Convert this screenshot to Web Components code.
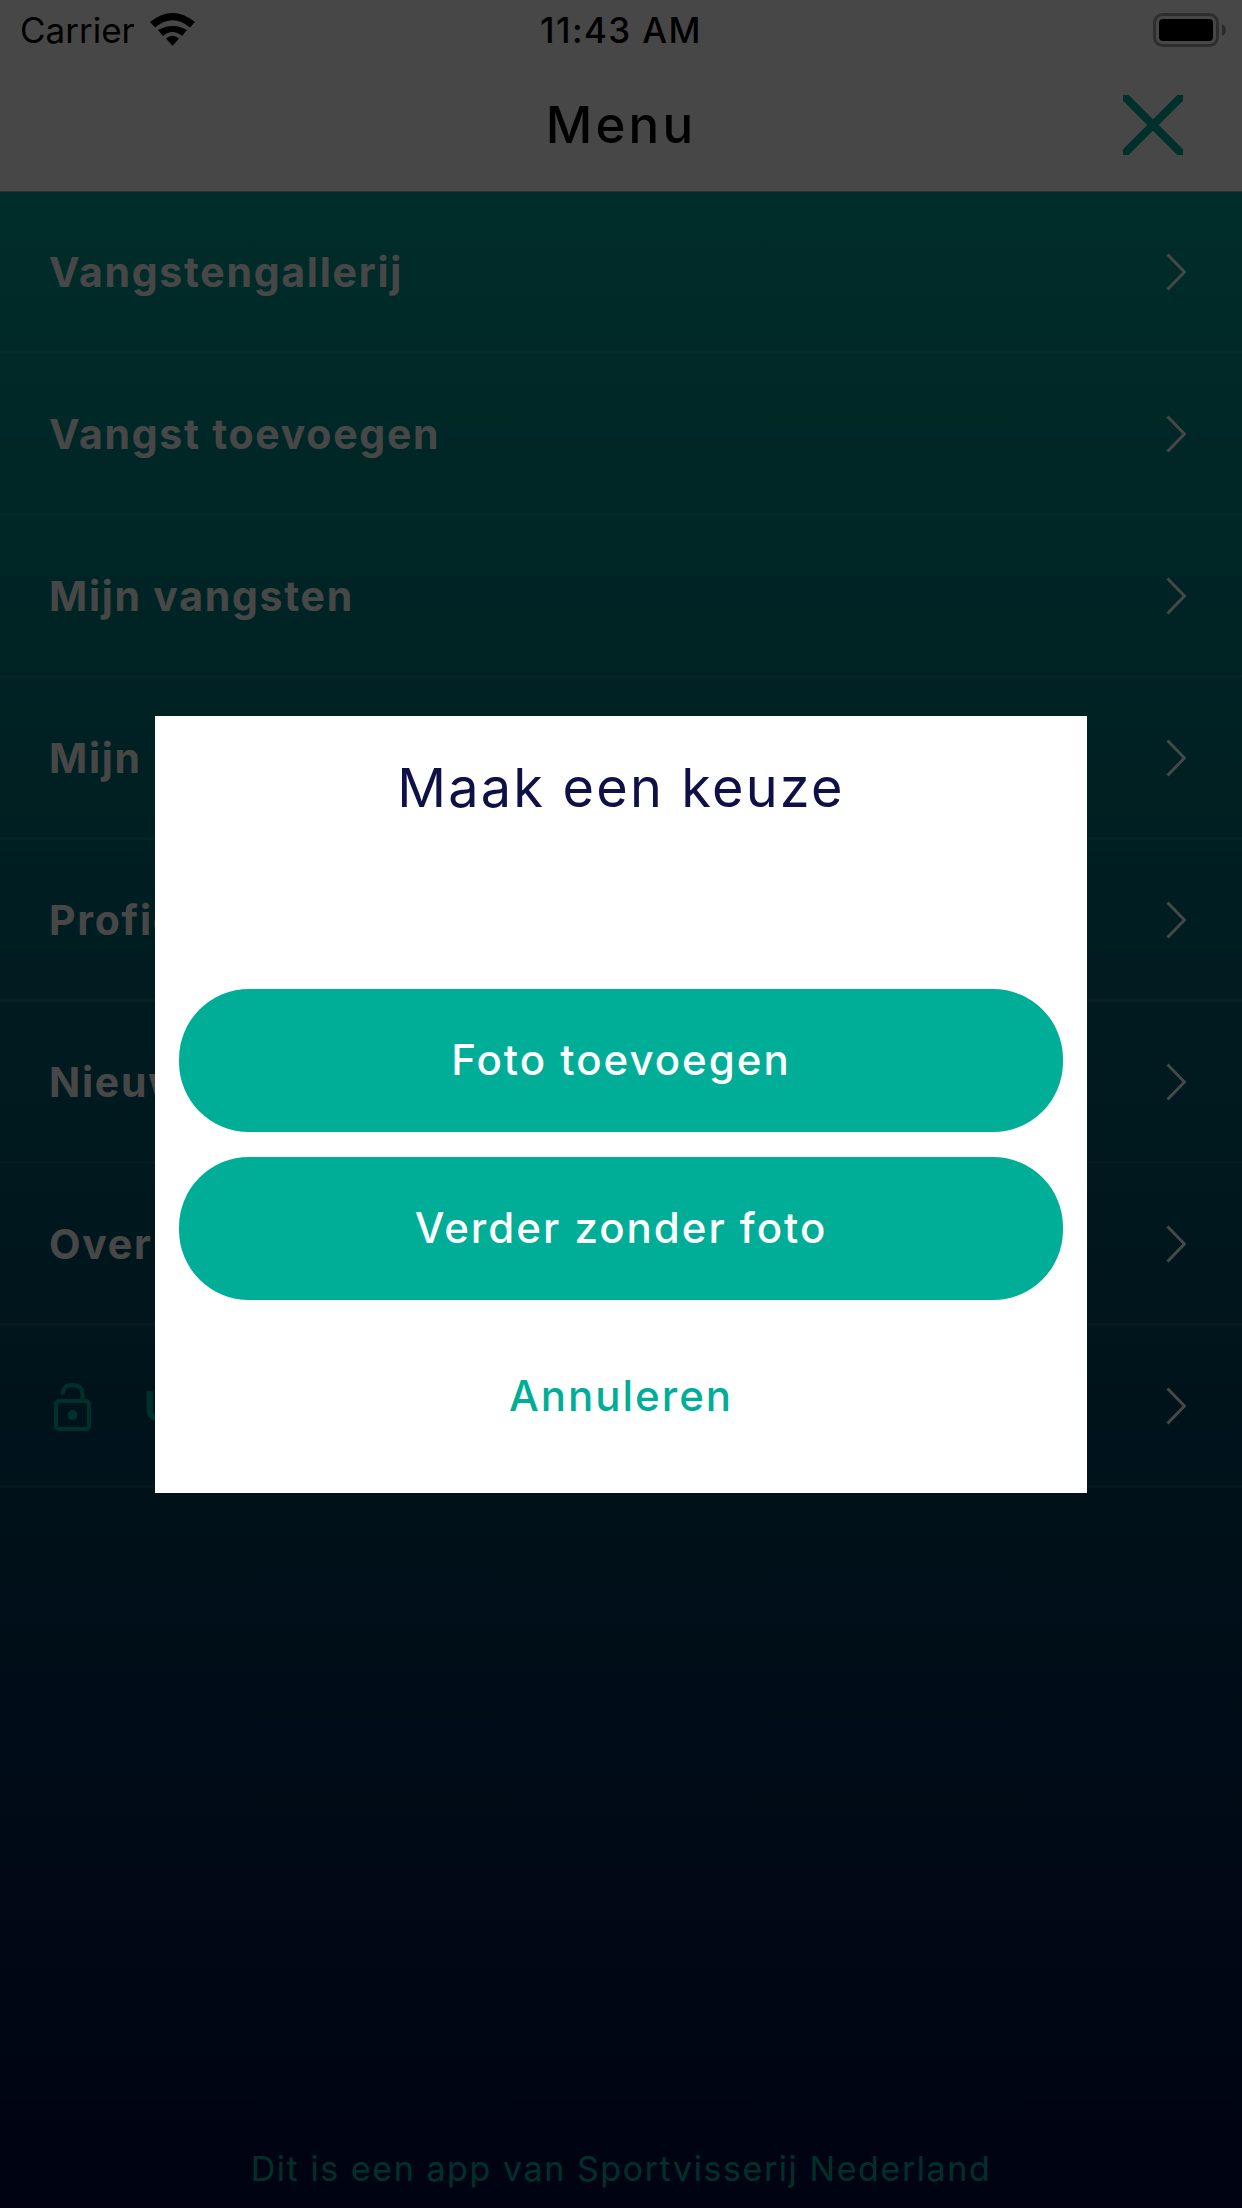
<!DOCTYPE html>
<html lang="nl"><head><meta charset="utf-8"><title>Menu</title>
<style>
html,body{margin:0;padding:0;width:1242px;height:2208px;overflow:hidden;background:#fff}
body{font-family:Inter,"Noto Sans",sans-serif}
</style></head><body>
<app-shell>
  <status-bar slot="top"></status-bar>
  <nav-bar slot="top" title="Menu"></nav-bar>
  <menu-row label="Vangstengallerij"></menu-row>
  <menu-row label="Vangst toevoegen"></menu-row>
  <menu-row label="Mijn vangsten"></menu-row>
  <menu-row label="Mijn"></menu-row>
  <menu-row label="Profiel"></menu-row>
  <menu-row label="Nieuws"></menu-row>
  <menu-row label="Over"></menu-row>
  <menu-row label="Uitloggen" lock></menu-row>
  <span slot="footer">Dit is een app van Sportvisserij Nederland</span>
  <choice-dialog slot="dialog" heading="Maak een keuze">
    <pill-button>Foto toevoegen</pill-button>
    <pill-button>Verder zonder foto</pill-button>
    <span slot="cancel">Annuleren</span>
  </choice-dialog>
</app-shell>
<script>
function def(name,html,init){
  customElements.define(name,class extends HTMLElement{
    constructor(){super();this.attachShadow({mode:'open'}).innerHTML=html;}
    connectedCallback(){init&&init(this,this.shadowRoot);}
  });
}
def('app-shell',`<style>
:host{display:block;position:relative;width:1242px;height:2208px;overflow:hidden}
.page{display:flex;flex-direction:column;height:2208px}
main{flex:1;display:flex;flex-direction:column;background:linear-gradient(180deg,#00a095 0%,#000a40 100%)}
.list{flex:1;display:flex;flex-direction:column}
footer{height:59px;text-align:center;color:#00ae98;font:400 34px/40px Inter,sans-serif;letter-spacing:1.57px}
.scrim{position:absolute;inset:0;background:rgba(0,0,0,.72);display:flex;align-items:center;justify-content:center}
</style>
<div class="page"><slot name="top"></slot><main><div class="list"><slot></slot></div><footer><slot name="footer"></slot></footer></main></div>
<div class="scrim"><slot name="dialog"></slot></div>`);
def('status-bar',`<style>
:host{display:flex;align-items:center;height:60px;background:#fff;color:#000;font:400 35px/60px Inter,sans-serif;position:relative;padding:0 20px;box-sizing:border-box}
.l{display:flex;align-items:center;gap:14px;flex:1}
.t{position:absolute;left:0;right:0;text-align:center;font-weight:500;letter-spacing:1.4px}
svg{display:block}
.w{margin-top:-1px}
.bat{position:absolute;right:16px;top:13px}
</style>
<div class="l"><span>Carrier</span>
<svg class="w" width="47" height="34" viewBox="0 0 47 34"><path d="M1 9Q23.500 -9 46 9L41 14.500Q23.500 0 6 14.500Z"/><path d="M9 17Q23.500 9 38 17L33 23Q23.500 15 14 23Z"/><path d="M23.500 33L17 25.500Q23.500 20 30 25.500Z"/></svg></div>
<span class="t">11:43 AM</span>
<svg class="bat" width="73" height="34" viewBox="0 0 73 34"><rect x="1.500" y="1.500" width="63" height="31" rx="8" fill="none" stroke="#000" stroke-opacity=".35" stroke-width="3"/><rect x="6" y="6" width="54" height="22" rx="4"/><path d="M69 11c2.500 1 4 3.500 4 6s-1.500 5-4 6z" fill="#000" fill-opacity=".4"/></svg>`);
def('nav-bar',`<style>
:host{display:flex;align-items:center;justify-content:center;height:132px;padding-bottom:1px;background:#fff;position:relative;box-sizing:border-box;border-bottom:1px solid rgba(0,0,0,.3)}
span{font:500 51px/60px Inter,sans-serif;color:#000;letter-spacing:3.2px}
svg{position:absolute;right:59px;top:35px}
</style><span></span>
<svg width="60" height="60" viewBox="0 0 60 60"><path d="M0 0L60 60M60 0L0 60" stroke="#00ae98" stroke-width="8" fill="none"/></svg>`,
(h,s)=>{s.querySelector('span').textContent=h.getAttribute('title')});
def('menu-row',`<style>
:host{display:flex;align-items:center;height:162px;box-sizing:border-box;padding:1px 56px 0 49px;border-bottom:3px solid rgba(255,255,255,.09);color:#fff;font:700 41px/48px Inter,sans-serif;letter-spacing:1.72px}
span{flex:1}
svg{display:block}
.lock{margin:2px 53px 0 5px;color:#00ae98}
:host(:not([lock])) .lock{display:none}
:host([lock]) span{color:#00ae98}
</style><svg class="lock" width="37" height="49" viewBox="0 0 37 49"><path d="M8.500 11.500C8.500 5 12.500 2 18.500 2S28.500 5 28.500 11V18" fill="none" stroke="currentColor" stroke-width="4"/><rect x="2" y="18" width="33" height="28" rx="3" fill="none" stroke="currentColor" stroke-width="4"/><circle cx="18.500" cy="32" r="5" fill="currentColor"/></svg><span></span>
<svg width="20" height="38" viewBox="0 0 20 38"><path d="M1.500 1.500L18.500 19L1.500 36.500" fill="none" stroke="#fff" stroke-width="3"/></svg>`,
(h,s)=>{s.querySelector('span').textContent=h.getAttribute('label')});
def('choice-dialog',`<style>
:host{display:flex;flex-direction:column;align-items:stretch;width:932px;height:777px;box-sizing:border-box;padding:0 24px;background:#fff}
h2{margin:0;height:273px;padding-top:40px;box-sizing:border-box;text-align:center;font:400 54px/64px Inter,sans-serif;letter-spacing:2.2px;color:#0f1046}
.btns{display:flex;flex-direction:column;gap:25px}
.c{flex:1;display:flex;align-items:center;justify-content:center;color:#00ae98;font:500 42px/48px Inter,sans-serif;letter-spacing:2px}
</style><h2></h2><div class="btns"><slot></slot></div><div class="c"><slot name="cancel"></slot></div>`,
(h,s)=>{s.querySelector('h2').textContent=h.getAttribute('heading')});
def('pill-button',`<style>
:host{display:flex;align-items:center;justify-content:center;height:143px;border-radius:70px;background:#00ae98;color:#fff;font:500 42px/48px Inter,sans-serif;letter-spacing:2px}
</style><slot></slot>`);
</script>
</body></html>
